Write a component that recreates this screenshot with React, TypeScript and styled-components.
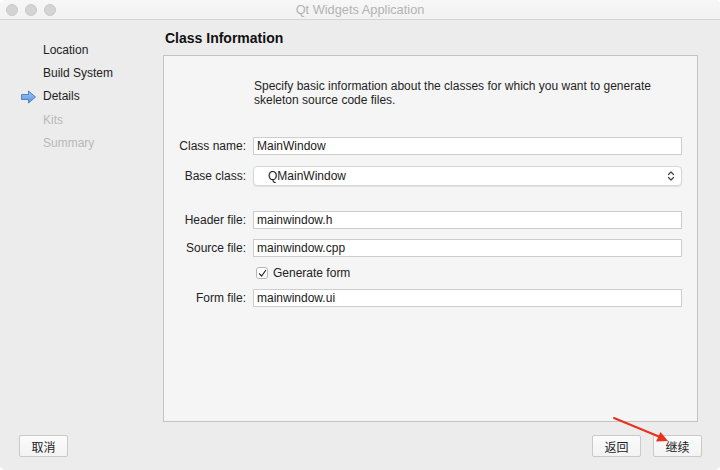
import React from "react";
import styled, { createGlobalStyle } from "styled-components";

const Global = createGlobalStyle`
  html, body { margin: 0; padding: 0; background: #ffffff; }
  body { font-family: "Liberation Sans", "Noto Sans CJK SC", sans-serif; font-size: 12px; color: #262626; }
  * { box-sizing: border-box; }
`;

const Window = styled.div`
  position: relative;
  width: 720px;
  height: 470px;
  background: #ececec;
  border-radius: 5px;
  overflow: hidden;
  display: grid;
  grid-template-rows: 20px 402px 48px;
`;

const TitleBar = styled.div`
  position: relative;
  background: linear-gradient(#f7f7f7, #f2f2f2);
  border-bottom: 1px solid #d6d6d6;
  display: flex;
  align-items: center;
  justify-content: center;
  font-size: 12.8px;
  color: #b3b3b3;
`;

const Lights = styled.div`
  position: absolute;
  left: 6px;
  top: 4px;
  display: flex;
  gap: 7px;
`;

const Light = styled.span`
  width: 12px;
  height: 12px;
  border-radius: 50%;
  background: #d4d4d4;
  border: 1px solid #c8c8c8;
`;

const Middle = styled.div`
  display: grid;
  grid-template-columns: 163px 1fr;
`;

const Sidebar = styled.div`
  padding-top: 18px;
  display: flex;
  flex-direction: column;
`;

const Step = styled.div<{ $disabled?: boolean }>`
  height: 23.3px;
  display: flex;
  align-items: center;
  padding-left: 43px;
  position: relative;
  font-size: 12px;
  color: ${(p) => (p.$disabled ? "#b9b9b9" : "#222222")};
`;

const StepArrow = styled.svg`
  position: absolute;
  left: 20px;
  top: 5px;
`;

const Main = styled.div`
  display: flex;
  flex-direction: column;
  padding-right: 22px;
`;

const Heading = styled.div`
  margin-top: 10px;
  height: 17px;
  line-height: 17px;
  margin-bottom: 8px;
  padding-left: 2px;
  font-size: 14px;
  font-weight: bold;
  color: #111;
`;

const Panel = styled.div`
  flex: 1;
  background: #f5f5f5;
  border: 1px solid #c3c3c3;
  padding: 22px 15px 0 0;
  display: flex;
  flex-direction: column;
`;

const Desc = styled.div`
  margin-left: 90px;
  margin-top: 1px;
  line-height: 14px;
  color: #1f1f1f;
  margin-bottom: 30px;
`;

const Row = styled.div<{ $gap: number; $h?: number }>`
  display: grid;
  grid-template-columns: 82px 1fr;
  column-gap: 7px;
  align-items: center;
  height: ${(p) => p.$h ?? 18}px;
  margin-top: ${(p) => p.$gap}px;
`;

const Label = styled.div`
  text-align: right;
  color: #222222;
`;

const Field = styled.div`
  height: 18px;
  background: #ffffff;
  border: 1px solid #cdcdcd;
  padding-left: 3px;
  display: flex;
  align-items: center;
  color: #1a1a1a;
`;

const Select = styled.div`
  height: 20px;
  background: #ffffff;
  border: 1px solid #d6d6d6;
  border-radius: 4px;
  box-shadow: 0 1px 1px rgba(0, 0, 0, 0.08);
  padding: 0 6px 0 14px;
  display: flex;
  align-items: center;
  justify-content: space-between;
  color: #1a1a1a;
`;

const CheckLine = styled.label`
  display: flex;
  align-items: center;
  gap: 5px;
  padding-left: 3px;
  color: #222222;
`;

const Box = styled.span`
  width: 12px;
  height: 12px;
  border-radius: 3px;
  border: 1px solid #b5b5b5;
  background: #ffffff;
  display: flex;
  align-items: center;
  justify-content: center;
`;

const Footer = styled.div`
  display: flex;
  align-items: flex-start;
  padding: 13px 18px 0 19px;
  gap: 12px;
`;

const Spacer = styled.div`
  flex: 1;
`;

const Button = styled.div`
  width: 49px;
  height: 22px;
  background: linear-gradient(#fbfbfb, #f3f3f3);
  border: 1px solid #c9c9c9;
  border-radius: 2px;
  display: flex;
  align-items: center;
  justify-content: center;
  font-family: "Noto Sans CJK SC", sans-serif;
  font-size: 12px;
  color: #222;
`;

const Annotation = styled.svg`
  position: absolute;
  left: 0;
  top: 0;
  pointer-events: none;
`;

const steps = [
  { name: "Location" },
  { name: "Build System" },
  { name: "Details", current: true },
  { name: "Kits", disabled: true },
  { name: "Summary", disabled: true },
];

export default function App() {
  return (
    <>
      <Global />
      <Window>
        <TitleBar>
          <Lights>
            <Light />
            <Light />
            <Light />
          </Lights>
          Qt Widgets Application
        </TitleBar>
        <Middle>
          <Sidebar>
            {steps.map((s) => (
              <Step key={s.name} $disabled={s.disabled}>
                {s.current && (
                  <StepArrow width="17" height="14" viewBox="0 0 17 14">
                    <defs>
                      <linearGradient id="ag" x1="0" y1="0" x2="0" y2="1">
                        <stop offset="0" stopColor="#9cc6f5" />
                        <stop offset="1" stopColor="#5b95e0" />
                      </linearGradient>
                    </defs>
                    <path
                      d="M1.5 4.5 H8.5 V1 L15.5 7 L8.5 13 V9.5 H1.5 Z"
                      fill="url(#ag)"
                      stroke="#4f82c6"
                      strokeWidth="1"
                      strokeLinejoin="round"
                    />
                  </StepArrow>
                )}
                {s.name}
              </Step>
            ))}
          </Sidebar>
          <Main>
            <Heading>Class Information</Heading>
            <Panel>
              <Desc>
                Specify basic information about the classes for which you want to generate
                <br />
                skeleton source code files.
              </Desc>
              <Row $gap={0}>
                <Label>Class name:</Label>
                <Field>MainWindow</Field>
              </Row>
              <Row $gap={11} $h={20}>
                <Label>Base class:</Label>
                <Select>
                  QMainWindow
                  <svg width="8" height="12" viewBox="0 0 8 12">
                    <path d="M1.5 4.5 L4 2 L6.5 4.5 M1.5 7.5 L4 10 L6.5 7.5" fill="none" stroke="#444" strokeWidth="1.2" strokeLinecap="round" strokeLinejoin="round" />
                  </svg>
                </Select>
              </Row>
              <Row $gap={25}>
                <Label>Header file:</Label>
                <Field>mainwindow.h</Field>
              </Row>
              <Row $gap={10}>
                <Label>Source file:</Label>
                <Field>mainwindow.cpp</Field>
              </Row>
              <Row $gap={7} $h={18}>
                <span />
                <CheckLine>
                  <Box>
                    <svg width="9" height="9" viewBox="0 0 9 9">
                      <path d="M1.5 4.8 L3.6 7 L7.6 1.5" fill="none" stroke="#222" strokeWidth="1.2" strokeLinecap="round" strokeLinejoin="round" />
                    </svg>
                  </Box>
                  Generate form
                </CheckLine>
              </Row>
              <Row $gap={7}>
                <Label>Form file:</Label>
                <Field>mainwindow.ui</Field>
              </Row>
            </Panel>
          </Main>
        </Middle>
        <Footer>
          <Button>取消</Button>
          <Spacer />
          <Button>返回</Button>
          <Button>继续</Button>
        </Footer>
        <Annotation width="720" height="470" viewBox="0 0 720 470">
          <line x1="614" y1="418" x2="660" y2="437" stroke="#e8321e" strokeWidth="2" strokeLinecap="round" />
          <path d="M668 441 L656 441.5 L660.5 432 Z" fill="#e8321e" />
        </Annotation>
      </Window>
    </>
  );
}
